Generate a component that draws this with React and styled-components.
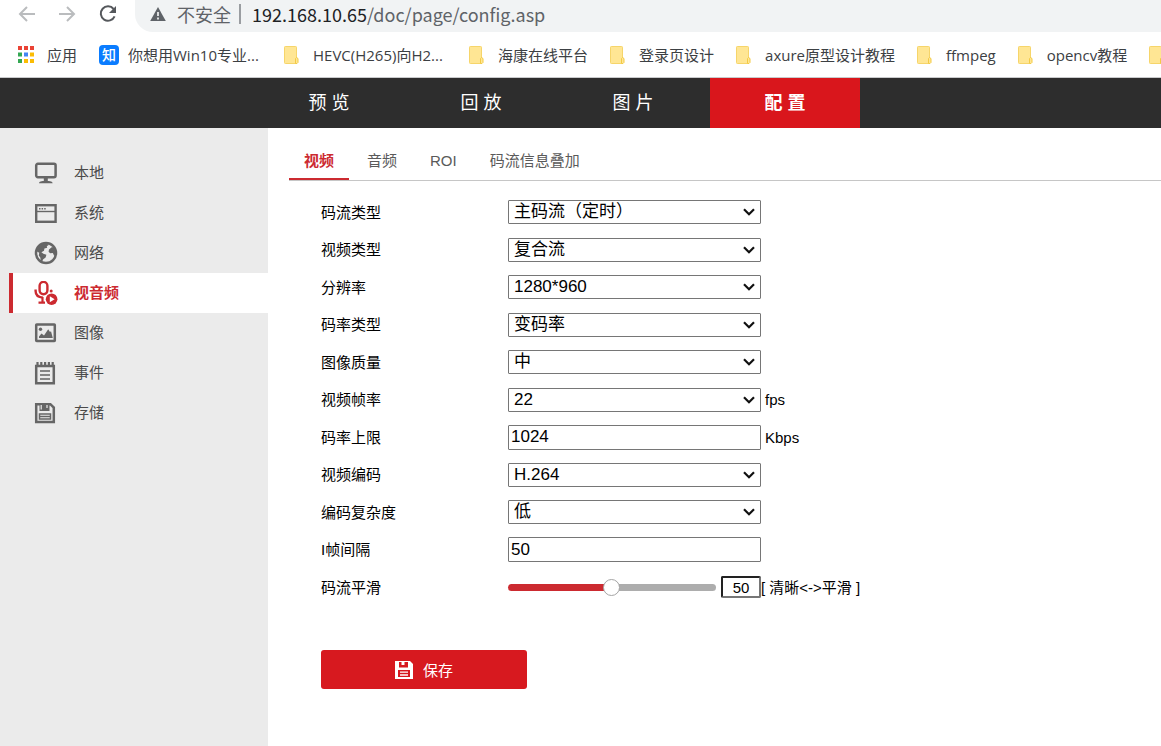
import React, { useState } from "react";
import styled, { createGlobalStyle } from "styled-components";

const GlobalStyle = createGlobalStyle`
  * {
    box-sizing: border-box;
  }
  body {
    margin: 0;
    background: #fff;
    color: #000;
    font-family: "Liberation Sans", "Noto Sans CJK SC", sans-serif;
    font-size: 15px;
  }
  button, input, select {
    font-family: inherit;
    margin: 0;
  }
`;

const Page = styled.div`
  display: flex;
  flex-direction: column;
  min-height: 100vh;
  overflow: hidden;
`;

/* browser bar */

const Browser = styled.header`
  font-family: "Noto Sans CJK SC", sans-serif;
  border-bottom: 1px solid #c9cacc;
  background: #fff;
`;

const Toolbar = styled.div`
  display: flex;
  height: 32px;
`;

const ToolButtons = styled.div`
  display: flex;
  flex: none;
  width: 135px;
  padding-left: 18px;
  gap: 20px;
`;

const ToolButton = styled.button`
  display: flex;
  align-items: center;
  width: 20px;
  height: 28px;
  padding: 0;
  border: 0;
  background: none;
  color: ${props => (props.$dim ? "#babcbe" : "#55585c")};
`;

const AddressBar = styled.div`
  flex: 1;
  display: flex;
  align-items: center;
  padding: 0 0 4px 15px;
  border-radius: 0 0 0 18px;
  background: #f1f3f4;
  color: #5f6368;
  font-size: 18px;
  line-height: 28px;
  white-space: nowrap;
`;

const Warning = styled.span`
  padding: 0 8px 0 11px;
  margin-right: 11px;
  border-right: 2px solid #9a9da1;
  line-height: 20px;
`;

const Host = styled.span`
  color: #202124;
`;

const Bookmarks = styled.nav`
  display: flex;
  align-items: center;
  gap: 22px;
  height: 45px;
  padding-left: 18px;
  font-family: "Open Sans", "Noto Sans CJK SC", sans-serif;
`;

// 名称过长的书签固定宽度
const Bookmark = styled.a`
  display: flex;
  flex: none;
  align-items: center;
  gap: ${props => props.$gap || 14}px;
  width: ${props => (props.$long ? "163px" : "auto")};
  color: #3c4043;
  font-size: 15px;
  line-height: 20px;
  text-decoration: none;
  white-space: nowrap;
`;

const Zhihu = styled.span`
  width: 20px;
  height: 20px;
  border-radius: 4px;
  background: #0a7cff;
  color: #fff;
  font-size: 14px;
  font-weight: 500;
  line-height: 19px;
  text-align: center;
`;

/* camera page */

const MainNav = styled.nav`
  display: flex;
  gap: 2px;
  height: 50px;
  padding-left: 254px;
  background: #2d2d2d;
`;

const MainNavLink = styled.a`
  width: 150px;
  padding-left: 5px;
  background: ${props => (props.$active ? "#d9161c" : "transparent")};
  color: #fff;
  font-size: 18px;
  font-weight: ${props => (props.$active ? "bold" : "normal")};
  letter-spacing: 5px;
  line-height: 50px;
  text-align: center;
  text-decoration: none;
`;

const Body = styled.div`
  flex: 1;
  display: flex;
`;

const Sidebar = styled.aside`
  flex: none;
  width: 268px;
  padding: 25px 0 0 9px;
  background: #ebebeb;
`;

const SideLink = styled.a`
  display: flex;
  align-items: center;
  gap: 16px;
  height: 40px;
  padding-left: 21px;
  border-left: 4px solid ${props => (props.$active ? "#cc2a30" : "transparent")};
  background: ${props => (props.$active ? "#fff" : "transparent")};
  color: ${props => (props.$active ? "#cc2a30" : "#4a4a4a")};
  font-weight: ${props => (props.$active ? "bold" : "normal")};
  text-decoration: none;

  svg {
    color: ${props => (props.$active ? "#cc2a30" : "#666")};
  }
`;

const SideText = styled.span`
  padding-bottom: 4px;
`;

const Content = styled.main`
  flex: 1;
  min-width: 0;
  padding-left: 21px;
`;

const Tabs = styled.nav`
  display: flex;
  align-items: flex-end;
  gap: 3px;
  height: 53px;
  border-bottom: 1px solid #c6c6c6;
`;

const Tab = styled.a`
  height: 36px;
  padding: 0 15px;
  border-bottom: 2px solid ${props => (props.$active ? "#cc2a30" : "transparent")};
  color: ${props => (props.$active ? "#cc2a30" : "#5a5a5a")};
  font-weight: ${props => (props.$active ? "bold" : "normal")};
  line-height: 34px;
  text-decoration: none;
`;

const Form = styled.form`
  padding: 12px 0 0 32px;
`;

const Row = styled.div`
  display: flex;
  align-items: center;
  height: 38px;

  &:nth-child(even) {
    height: 37px;
  }
`;

const Label = styled.label`
  flex: none;
  width: 187px;
  padding-bottom: 2px;
`;

const SelectBox = styled.div`
  display: grid;
  align-items: center;
  width: 253px;

  select, svg {
    grid-area: 1 / 1;
  }
  svg {
    justify-self: end;
    margin-right: 6px;
    pointer-events: none;
  }
`;

const Select = styled.select`
  appearance: none;
  width: 100%;
  height: 24px;
  padding: 0 24px 0 5px;
  border: 1px solid #767676;
  border-radius: 1px;
  background: #fff;
  color: #000;
  font-size: 17px;
  line-height: 22px;
`;

const TextInput = styled.input`
  width: 253px;
  height: 25px;
  padding: 0 2px;
  border: 1px solid #767676;
  border-radius: 1px;
  font-size: 17px;
`;

const Unit = styled.span`
  padding-left: 4px;
`;

const Hint = styled.span`
  padding-bottom: 2px;
`;

const Slider = styled.input`
  appearance: none;
  width: 208px;
  height: 7px;
  margin-right: 5px;
  border-radius: 4px;

  &::-webkit-slider-thumb {
    appearance: none;
    width: 17px;
    height: 17px;
    border: 1px solid #a5a5a5;
    border-radius: 50%;
    background: #fff;
  }
`;

const SliderValue = styled.input`
  width: 40px;
  height: 22px;
  padding: 0;
  border: 2px solid;
  border-color: #222 #767676 #767676 #222;
  border-radius: 2px;
  font-size: 15px;
  text-align: center;
`;

const SaveButton = styled.button`
  display: flex;
  align-items: center;
  justify-content: center;
  gap: 10px;
  width: 206px;
  height: 39px;
  margin-top: 44px;
  border: 0;
  border-radius: 3px;
  background: #d7191f;
  color: #fff;
  font-size: 15px;
`;

const Icon = ({ size = 24, box = 24, children }) => (
  <svg width={size} height={size} viewBox={`0 0 ${box} ${box}`} fill="none" stroke="currentColor" strokeWidth="2" aria-hidden="true">
    {children}
  </svg>
);

const BackIcon = () => (
  <Icon size={20} box={20}>
    <path d="M17 10H2M9 3l-7 7 7 7" />
  </Icon>
);

const ForwardIcon = () => (
  <Icon size={20} box={20}>
    <path d="M1 10h15M9 3l7 7-7 7" />
  </Icon>
);

const ReloadIcon = () => (
  <Icon size={20} box={20}>
    <path d="M15.6 5A7.2 7.2 0 1 0 16.6 12.4" />
    <path d="M18 2v7h-7z" fill="currentColor" stroke="none" />
  </Icon>
);

const WarningIcon = () => (
  <Icon size={16} box={16}>
    <path d="M8 1l7.8 14H.2z" fill="currentColor" stroke="none" />
    <path d="M8 6v4M8 11.6v1.8" stroke="#f1f3f4" strokeWidth="1.7" />
  </Icon>
);

const APP_DOTS = ["#ea4335", "#ea4335", "#ea4335", "#34a853", "#4285f4", "#fbbc04", "#34a853", "#fbbc04", "#fbbc04"];

const AppsIcon = () => (
  <svg width="16" height="18" viewBox="0 0 16 18" aria-hidden="true">
    {APP_DOTS.map((color, i) => (
      <rect key={i} x={(i % 3) * 6} y={Math.floor(i / 3) * 6.5} width="4" height="4" fill={color} />
    ))}
  </svg>
);

const FolderIcon = () => (
  <svg width="15" height="18" viewBox="0 0 15 18" aria-hidden="true">
    <rect x="0.5" y="0.5" width="12" height="17" rx="0.8" fill="#ffe694" stroke="#f6d56a" />
    <path d="M11.5 17.5v-5l1-1 1.5 1v4l-1 1z" fill="#ffe694" stroke="#f3ca45" />
  </svg>
);

const MonitorIcon = () => (
  <Icon>
    <rect x="2.2" y="2.8" width="19.4" height="13.4" rx="1.6" strokeWidth="2.5" />
    <path d="M9.8 17h4v3.4h-4z" fill="currentColor" stroke="none" />
    <path d="M5 22.2c0-1.6 2-2.2 6.8-2.2s6.8.6 6.8 2.2z" fill="currentColor" stroke="none" />
  </Icon>
);

const WindowIcon = () => (
  <Icon>
    <rect x="2.2" y="4.2" width="19.4" height="16.6" strokeWidth="2.4" />
    <path d="M2 10.5h19.6" strokeWidth="1.4" />
    <path d="M5 7.7h1.5M7.6 7.7h1.5M10.2 7.7h1.5" strokeWidth="1.4" />
  </Icon>
);

const GlobeIcon = () => (
  <Icon>
    <circle cx="12" cy="12" r="10" strokeWidth="2.5" />
    <path
      d="M2 10C3 5 7 2 12 1.8L14.6 4l-1.8 1.2.4 1.6-2.8.6-.4 2.4-2.6 1.4 2 1.6 3 1-.8 2.6-2.6 2-1 3.2-1.2-.2-.4-4.6-1.6-2.4.4-2.6L3 10.6z"
      fill="currentColor"
      stroke="none"
    />
    <path d="M15 8.5l3-2.5 2.5 1L22 11v4l-2-.5-1.2-2.6-2.6.4-1.6-1.6z" fill="currentColor" stroke="none" />
  </Icon>
);

const MicIcon = () => (
  <Icon>
    <rect x="5.6" y="0.9" width="7.8" height="12.3" rx="3.9" strokeWidth="2.4" />
    <path d="M1.6 8.5v1.5c0 3.4 2.4 6.3 7.4 6.6" strokeWidth="2.4" />
    <path d="M8.5 16v5M4.5 21.6h6.5" strokeWidth="2.2" />
    <circle cx="17.2" cy="10" r="1.5" fill="currentColor" stroke="none" />
    <circle cx="17.6" cy="18.2" r="5.8" fill="currentColor" stroke="none" />
    <path d="M15.8 15.2l4.8 3-4.8 3z" fill="#fff" stroke="none" />
  </Icon>
);

const ImageIcon = () => (
  <Icon>
    <rect x="2.2" y="3.6" width="18.6" height="16.4" rx="0.5" strokeWidth="2.5" />
    <circle cx="6.5" cy="8.2" r="1.7" fill="currentColor" stroke="none" />
    <path d="M5 17v-1.5l2.5-3 2.5 2 4.2-6.3L16 11l1-.8 1.8 6.8z" fill="currentColor" stroke="none" />
  </Icon>
);

const NotepadIcon = () => (
  <Icon>
    <path d="M2.2 5h17.6v17.2H2.2z" strokeWidth="2.5" />
    <path d="M3.5 1v4M7.3 1v4M11.1 1v4M14.9 1v4M18.7 1v4" strokeWidth="2.2" />
    <path d="M6 10h10M6 14h10M6 18h10" strokeWidth="1.5" />
  </Icon>
);

const DiskIcon = () => (
  <Icon>
    <path d="M2.2 3.2h14.2l3.4 3.4V21H2.2z" strokeWidth="2.5" />
    <path d="M5.5 3h10v7h-10z" fill="currentColor" stroke="none" />
    <path d="M7.2 4v4.5M13 4v3" stroke="#ebebeb" strokeWidth="1.2" />
    <path d="M5.5 18v-5h11v5zM5.5 15.6h11" strokeWidth="1.5" />
  </Icon>
);

const SaveIcon = () => (
  <Icon size={18} box={18}>
    <path d="M0 0h15l3 3v15H0z" fill="currentColor" stroke="none" />
    <path d="M4 1h2.5v3h3V1H13v5.5H4z" fill="#d7191f" stroke="none" />
    <path d="M3 9h12v7H3z" fill="#d7191f" stroke="none" />
    <path d="M5 11.2h8M5 14h8" strokeWidth="1.3" />
  </Icon>
);

const Chevron = () => (
  <svg width="12" height="8" viewBox="0 0 12 8" fill="none" stroke="#111" strokeWidth="2.2" aria-hidden="true">
    <path d="M1 1.2l5 5 5-5" />
  </svg>
);

const FOLDERS = ["HEVC(H265)向H2...", "海康在线平台", "登录页设计", "axure原型设计教程", "ffmpeg", "opencv教程", ""];

const MAIN_NAV = ["预览", "回放", "图片", "配置"];

const SIDE_NAV = [
  { text: "本地", icon: MonitorIcon },
  { text: "系统", icon: WindowIcon },
  { text: "网络", icon: GlobeIcon },
  { text: "视音频", icon: MicIcon },
  { text: "图像", icon: ImageIcon },
  { text: "事件", icon: NotepadIcon },
  { text: "存储", icon: DiskIcon }
];

const TABS = ["视频", "音频", "ROI", "码流信息叠加"];

const FIELDS = [
  { id: "streamType", label: "码流类型", options: ["主码流（定时）", "子码流"] },
  { id: "videoType", label: "视频类型", options: ["复合流", "视频流"] },
  { id: "resolution", label: "分辨率", options: ["1280*960", "1280*720"] },
  { id: "bitrateType", label: "码率类型", options: ["变码率", "定码率"] },
  { id: "quality", label: "图像质量", options: ["中", "低", "高"] },
  { id: "frameRate", label: "视频帧率", options: ["22", "25"], unit: "fps" },
  { id: "maxBitrate", label: "码率上限", value: "1024", unit: "Kbps" },
  { id: "encoding", label: "视频编码", options: ["H.264", "H.265"] },
  { id: "complexity", label: "编码复杂度", options: ["低", "中", "高"] },
  { id: "iFrame", label: "I帧间隔", value: "50" }
];

const Field = ({ id, label, options, value, unit }) => (
  <Row>
    <Label htmlFor={id}>{label}</Label>
    {options ? (
      <SelectBox>
        <Select id={id}>
          {options.map(option => (
            <option key={option}>{option}</option>
          ))}
        </Select>
        <Chevron />
      </SelectBox>
    ) : (
      <TextInput id={id} type="text" defaultValue={value} />
    )}
    {unit && <Unit>{unit}</Unit>}
  </Row>
);

const SmoothField = () => {
  const [smooth, setSmooth] = useState(50);
  const onChange = e => setSmooth(Number(e.target.value) || 1);

  return (
    <Row>
      <Label htmlFor="smooth">码流平滑</Label>
      <Slider
        id="smooth"
        type="range"
        min="1"
        max="100"
        value={smooth}
        onChange={onChange}
        style={{ background: `linear-gradient(to right, #cc2a30 ${smooth}%, #adadad ${smooth}%)` }}
      />
      <SliderValue type="text" aria-label="码流平滑" value={smooth} onChange={onChange} />
      <Hint>[ 清晰&lt;-&gt;平滑 ]</Hint>
    </Row>
  );
};

const App = () => {
  const onSubmit = e => {
    e.preventDefault();
  };

  return (
    <Page>
      <GlobalStyle />
      <Browser>
        <Toolbar>
          <ToolButtons>
            <ToolButton $dim aria-label="后退"><BackIcon /></ToolButton>
            <ToolButton $dim aria-label="前进"><ForwardIcon /></ToolButton>
            <ToolButton aria-label="刷新"><ReloadIcon /></ToolButton>
          </ToolButtons>
          <AddressBar>
            <WarningIcon />
            <Warning>不安全</Warning>
            <span><Host>192.168.10.65</Host>/doc/page/config.asp</span>
          </AddressBar>
        </Toolbar>
        <Bookmarks>
          <Bookmark href="#" $gap={13}><AppsIcon />应用</Bookmark>
          <Bookmark href="#" $gap={9} $long><Zhihu>知</Zhihu>你想用Win10专业...</Bookmark>
          {FOLDERS.map(name => (
            <Bookmark key={name} href="#" $long={name.endsWith("...")}><FolderIcon />{name}</Bookmark>
          ))}
        </Bookmarks>
      </Browser>
      <MainNav>
        {MAIN_NAV.map(text => (
          <MainNavLink key={text} href="#" $active={text === "配置"}>{text}</MainNavLink>
        ))}
      </MainNav>
      <Body>
        <Sidebar>
          {SIDE_NAV.map(({ text, icon: ItemIcon }) => (
            <SideLink key={text} href="#" $active={text === "视音频"}>
              <ItemIcon />
              <SideText>{text}</SideText>
            </SideLink>
          ))}
        </Sidebar>
        <Content>
          <Tabs>
            {TABS.map(text => (
              <Tab key={text} href="#" $active={text === "视频"}>{text}</Tab>
            ))}
          </Tabs>
          <Form onSubmit={onSubmit}>
            {FIELDS.map(field => (
              <Field key={field.id} {...field} />
            ))}
            <SmoothField />
            <SaveButton type="submit"><SaveIcon />保存</SaveButton>
          </Form>
        </Content>
      </Body>
    </Page>
  );
};

export default App;
